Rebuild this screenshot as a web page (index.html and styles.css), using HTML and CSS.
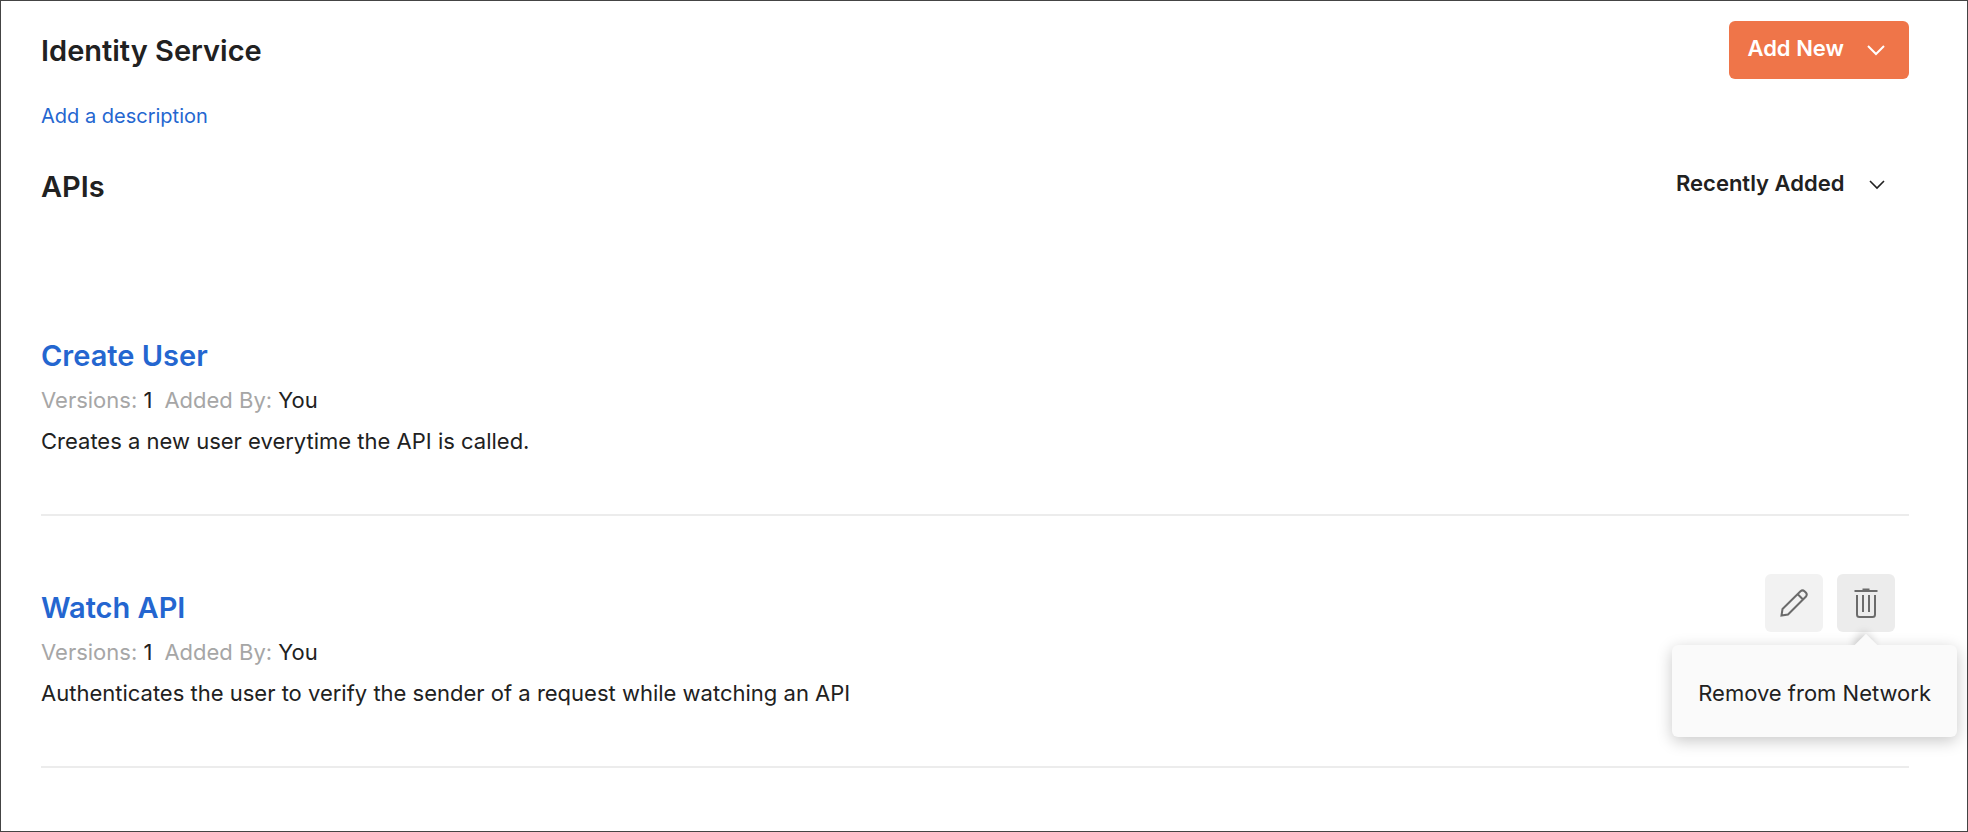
FILE: index.html
```
<!DOCTYPE html>
<html lang="en">
<head>
  <meta charset="UTF-8" />
  <title>Identity Service</title>
  <link rel="stylesheet" href="styles.css">
</head>
<body>
  <main class="page">
    <header class="page-header">
      <h1>Identity Service</h1>
      <button class="btn-add" type="button">
        Add New
        <svg class="chevron" viewBox="0 0 18 12" aria-hidden="true"><path d="M1 2l8 8 8-8" /></svg>
      </button>
    </header>
    <a class="add-description" href="#">Add a description</a>

    <div class="list-header">
      <h2>APIs</h2>
      <div class="sort">
        <select aria-label="Sort APIs">
          <option>Recently Added</option>
        </select>
        <svg class="chevron" viewBox="0 0 18 12" aria-hidden="true"><path d="M2 2l7 7 7-7" /></svg>
      </div>
    </div>

    <section class="api-list">
      <article class="api">
        <div class="api-info">
          <h3><a href="#">Create User</a></h3>
          <p class="meta"><span>Versions: <b>1</b></span><span>Added By: <b>You</b></span></p>
          <p class="summary">Creates a new user everytime the API is called.</p>
        </div>
      </article>

      <article class="api">
        <div class="api-info">
          <h3><a href="#">Watch API</a></h3>
          <p class="meta"><span>Versions: <b>1</b></span><span>Added By: <b>You</b></span></p>
          <p class="summary">Authenticates the user to verify the sender of a request while watching an API</p>
        </div>
        <div class="actions">
          <button class="icon-btn" type="button" aria-label="Edit">
            <svg viewBox="0 0 30 32" aria-hidden="true">
              <path d="M2.500 28.500L3.500 22 21.500 4.200Q23.500 2.500 25.500 4.200L27 5.700Q28.500 7.700 27 9.500L9 27.500 2.500 28.500zM18.500 7L24 12.500" />
            </svg>
          </button>
          <div class="tooltip-wrap">
            <button class="icon-btn active" type="button" aria-label="Remove" aria-describedby="remove-tip">
              <svg viewBox="0 0 30 32" aria-hidden="true">
                <path d="M3.500 4H26.500M11.500 2.500H18.500M6 8V27.500Q6 30 8.500 30H21.500Q24 30 24 27.500V8M12 8V25M18 8V25" />
              </svg>
            </button>
            <div class="tooltip" id="remove-tip" role="tooltip">Remove from Network</div>
          </div>
        </div>
      </article>
    </section>
  </main>
</body>
</html>
```
FILE: styles.css
```
* {
  box-sizing: border-box;
}
body {
  margin: 0;
  font-family: Inter, sans-serif;
  font-size: 22px;
  line-height: 32px;
  color: #212121;
  background-color: #fff;
}
h1, h2, h3, p {
  margin: 0;
}
h1, h2, h3 {
  font-size: 29px;
  font-weight: 600;
  line-height: 40px;
}
a {
  color: #2466d0;
  text-decoration: none;
}
button, select {
  font: inherit;
  color: inherit;
  border: none;
  cursor: pointer;
}
svg {
  fill: none;
  stroke: currentColor;
  stroke-width: 2;
}
.page {
  min-height: 100vh;
  padding: 20px 58px 20px 40px;
  border: 1px solid #444;
}
.page-header {
  display: flex;
  justify-content: space-between;
  align-items: flex-start;
}
.page-header h1 {
  line-height: 60px;
}
.btn-add {
  display: flex;
  align-items: center;
  gap: 23px;
  height: 58px;
  padding: 0 24px 4px 18px;
  border-radius: 6px;
  background-color: #ef7549;
  color: #fff;
  font-weight: 600;
}
.chevron {
  width: 18px;
  height: 12px;
  margin-top: 4px;
}
.sort .chevron {
  stroke-width: 1.6;
}
.add-description {
  display: block;
  width: fit-content;
  margin-top: 19px;
  font-size: 20px;
}
.list-header {
  display: flex;
  justify-content: space-between;
  align-items: flex-start;
  margin-top: 35px;
}
.sort {
  display: flex;
  align-items: center;
  gap: 23px;
  padding-right: 23px;
}
.sort select {
  appearance: none;
  padding: 0;
  background: none;
  font-weight: 600;
}
.api-list {
  margin-top: 57px;
}
.api {
  display: flex;
  justify-content: space-between;
  align-items: flex-start;
  padding: 58px 14px 57px 0;
  border-bottom: 2px solid #ececec;
}
.api-info {
  padding-top: 14px;
}
.meta {
  display: flex;
  gap: 12px;
  margin: 8px 0 9px;
  color: #a6a6a6;
}
.meta b {
  font-weight: 400;
  color: #212121;
}
.actions {
  display: flex;
  gap: 14px;
}
.icon-btn {
  display: flex;
  align-items: center;
  justify-content: center;
  width: 58px;
  height: 58px;
  padding: 0;
  border-radius: 6px;
  background-color: #f2f2f2;
  color: #6b6b6b;
}
.icon-btn.active {
  background-color: #ececec;
}
.icon-btn svg {
  width: 30px;
  height: 32px;
}
/* tooltip under the remove button */
.tooltip-wrap {
  position: relative;
}
.tooltip {
  position: absolute;
  top: 71px;
  right: -62px;
  padding: 32px 26px 28px;
  border-radius: 6px;
  background-color: #fafafa;
  box-shadow: 0 4px 16px rgba(0, 0, 0, 0.22);
  white-space: nowrap;
}
.tooltip::before {
  content: "";
  position: absolute;
  top: -8px;
  right: 83px;
  width: 16px;
  height: 16px;
  background-color: #fafafa;
  box-shadow: -3px 0 8px rgba(0, 0, 0, 0.2);
  clip-path: polygon(-16px -16px, 32px -16px, -16px 32px);
  transform: rotate(45deg);
}
```
